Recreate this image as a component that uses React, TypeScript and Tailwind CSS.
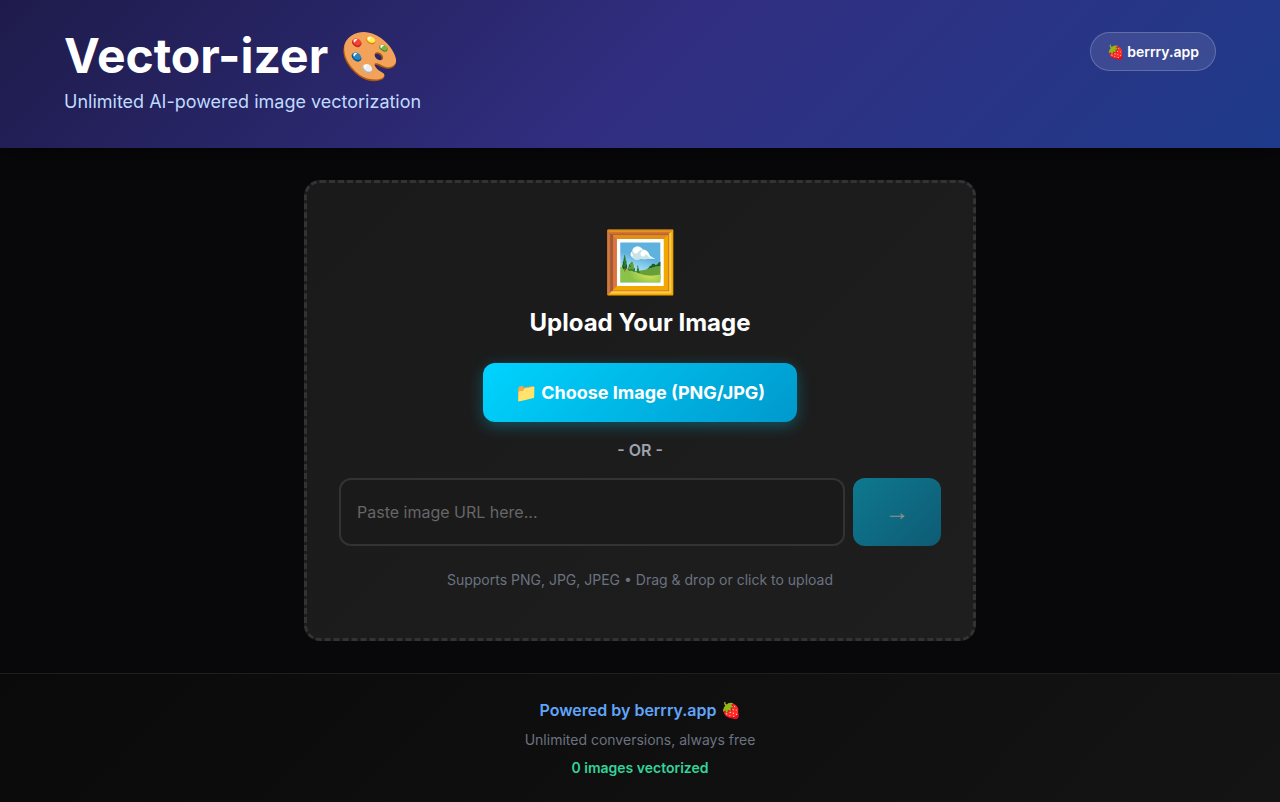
import React, { useState } from 'react';

const font = "font-['Inter','Liberation_Sans',sans-serif]";

const Header = () => {
  return (
    <header className="bg-linear-135 from-[#1e1b4b] via-[#312e81] to-[#1e3a8a] px-16 py-8 shadow-[0_4px_20px_rgba(0,0,0,0.5)]">
      <div className="flex items-start justify-between">
        <div>
          <h1 className="text-5xl font-bold text-white mb-2">Vector-izer 🎨</h1>
          <p className="text-lg text-[#bfdbfe]">Unlimited AI-powered image vectorization</p>
        </div>
        <a href="#" className="rounded-[20px] border border-white/20 bg-white/10 px-4 py-2 text-sm leading-[21px] font-semibold text-white">
          🍓 berrry.app
        </a>
      </div>
    </header>
  );
};

const UploadCard = () => {
  const [url, setUrl] = useState('');

  return (
    <section className="mx-auto max-w-2xl rounded-2xl border-3 border-dashed border-[#333333] bg-linear-135 from-[#1a1a1a] to-[#1e1e1e] px-8 py-12 text-center">
      <div className="text-6xl mb-4">🖼️</div>
      <h2 className="text-2xl font-bold text-white mb-6">Upload Your Image</h2>
      <button type="button" className="rounded-xl bg-linear-135 from-[#00d4ff] to-[#0099cc] px-8 py-4 text-lg leading-[27px] font-bold text-white shadow-[0_4px_15px_rgba(0,212,255,0.3)]">
        📁 Choose Image (PNG/JPG)
      </button>
      <p className="my-4 font-semibold text-[#9ca3af]">- OR -</p>
      <form className="flex gap-2" onSubmit={(e) => e.preventDefault()}>
        <input
          type="text"
          aria-label="Image URL"
          placeholder="Paste image URL here..."
          value={url}
          onChange={(e) => setUrl(e.target.value)}
          className="min-w-0 flex-1 rounded-xl border-2 border-[#333333] bg-[#1a1a1a] p-4 text-white placeholder:text-[#666666]"
        />
        <button type="submit" aria-label="Convert" disabled={!url} className="rounded-xl bg-linear-135 from-[#00d4ff] to-[#0099cc] px-8 py-4 font-['Liberation_Sans',sans-serif] text-2xl leading-9 font-bold text-white disabled:opacity-50">
          →
        </button>
      </form>
      <p className="mt-6 text-sm text-[#6b7280]">Supports PNG, JPG, JPEG • Drag &amp; drop or click to upload</p>
    </section>
  );
};

const Footer = () => {
  return (
    <footer className="border-t border-[#1f1f1f] bg-linear-135 from-[#0a0a0a] to-[#141414] py-6 text-center">
      <a href="#" className="font-semibold text-[#60a5fa]">Powered by berrry.app 🍓</a>
      <p className="mt-2 text-sm text-[#6b7280]">Unlimited conversions, always free</p>
      <p className="mt-2 text-sm font-semibold text-[#34d399]">0 images vectorized</p>
    </footer>
  );
};

export default function App() {
  return (
    <div className={`min-h-screen bg-[#08080a] ${font}`}>
      <Header />
      <main className="p-8">
        <UploadCard />
      </main>
      <Footer />
    </div>
  );
}
